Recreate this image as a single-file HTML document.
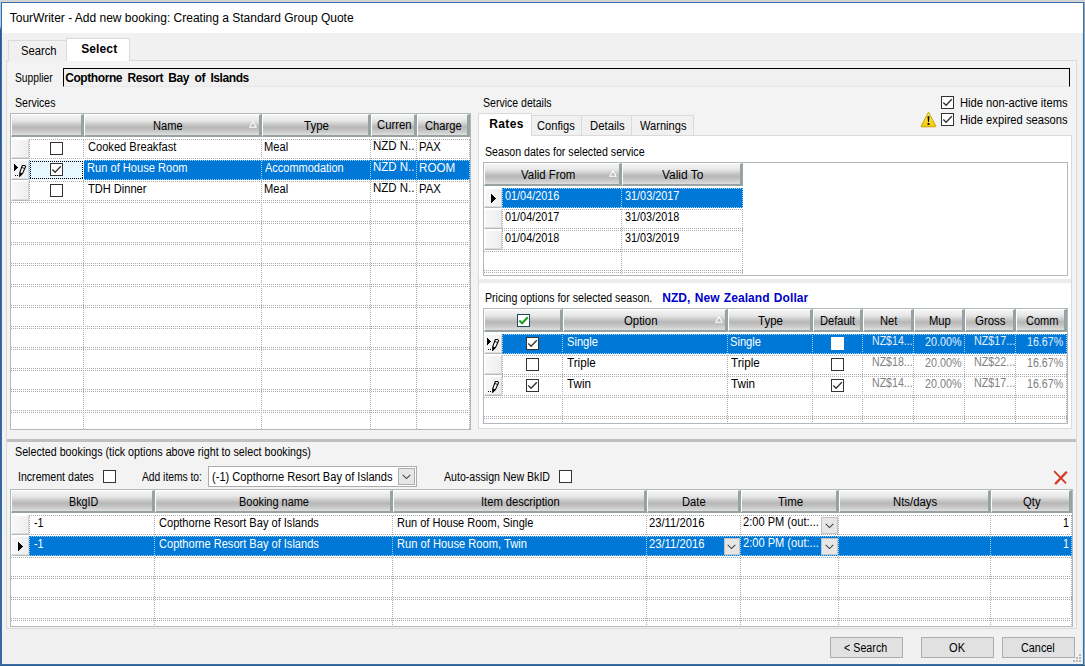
<!DOCTYPE html><html><head><meta charset="utf-8"><title>TourWriter</title><style>
*{box-sizing:border-box;margin:0;padding:0}
html,body{width:1085px;height:666px;overflow:hidden}
body{position:relative;background:#f1f1f1;font-family:"Liberation Sans",sans-serif;font-size:11px;color:#000}
.a{position:absolute}
.t{position:absolute;white-space:nowrap;line-height:13px;height:13px}
.h{position:absolute;background:linear-gradient(180deg,#f6f6f6 0%,#e6e6e6 28%,#b7b7b7 60%,#c3c3c3 76%,#dedede 100%);border-left:1px solid #fff;border-top:1px solid #fff;border-right:3px solid #98a3a1;border-bottom:2px solid #98a3a1;overflow:hidden}
.hd{position:absolute;height:1px;background-image:repeating-linear-gradient(90deg,#acacac 0,#acacac 1px,transparent 1px,transparent 2px)}
.vd{position:absolute;width:1px;background-image:repeating-linear-gradient(180deg,#acacac 0,#acacac 1px,transparent 1px,transparent 2px)}
.hdw{position:absolute;height:1px;background-image:repeating-linear-gradient(90deg,#9fd0f5 0,#9fd0f5 1px,transparent 1px,transparent 2px)}
.vdw{position:absolute;width:1px;background-image:repeating-linear-gradient(180deg,#9fd0f5 0,#9fd0f5 1px,transparent 1px,transparent 2px)}
.hdk{position:absolute;height:1px;background-image:repeating-linear-gradient(90deg,#000 0,#000 1px,transparent 1px,transparent 2px)}
.vdk{position:absolute;width:1px;background-image:repeating-linear-gradient(180deg,#000 0,#000 1px,transparent 1px,transparent 2px)}
.rs{position:absolute;background:linear-gradient(90deg,#f8f8f8,#eeeeee);border-top:1px solid #fff;border-left:1px solid #fff;border-right:1px solid #d4d4d4;border-bottom:1px solid #b4baba;box-shadow:inset 0 -1px 0 #dcdcdc}
.cb{position:absolute;width:13px;height:13px;border:1px solid #333;background:#fff}
.grid{position:absolute;background:#fff;border:1px solid #b0b8c0;overflow:hidden}
.sel{position:absolute;background:#0078d7}
.btn{position:absolute;background:#e1e1e1;border:1px solid #adadad}
.dd{position:absolute;background:#e6e6e6;border:1px solid #c2c2c2}
</style></head><body>
<div class="a" style="left:0px;top:0px;width:1085px;height:2px;background:linear-gradient(180deg,#cfcfcf,#dadada)"></div>
<div class="a" style="left:0px;top:2px;width:1px;height:664px;background:linear-gradient(180deg,#a9cdf0 0,#a9cdf0 24px,#2f5597 28px,#3a66a8 100%)"></div>
<div class="a" style="left:1px;top:2px;width:1083px;height:663px;border:1px solid #386ea8;background:transparent"></div>
<div class="a" style="left:1084px;top:2px;width:1px;height:664px;background:#8fa6bd"></div>
<div class="a" style="left:1082px;top:33px;width:1px;height:631px;background:#d4edfb"></div>
<div class="a" style="left:0px;top:665px;width:1085px;height:1px;background:#35608c"></div>
<div class="a" style="left:2px;top:3px;width:1081px;height:30px;background:#fff"></div>
<div class="t" style="left:9.73px;top:11px;font-size:12px;letter-spacing:-0.001px;line-height:15px;height:15px">TourWriter - Add new booking: Creating a Standard Group Quote</div>
<div class="a" style="left:6px;top:60px;width:1071px;height:569px;border:1px solid #dadada;background:#f3f3f3"></div>
<div class="a" style="left:8px;top:40px;width:59px;height:21px;border:1px solid #dadada;border-bottom:none;background:#f0f0f0"></div>
<div class="t" style="left:20.79px;top:45px;font-size:12.5px;transform-origin:0 0;transform:scaleX(0.8967);">Search</div>
<div class="a" style="left:66px;top:38px;width:64px;height:23px;border:1px solid #dadada;border-bottom:none;background:#fff"></div>
<div class="t" style="left:81.15px;top:43px;font-size:12px;font-weight:bold;letter-spacing:0.130px;">Select</div>
<div class="t" style="left:15.03px;top:72px;font-size:12.5px;transform-origin:0 0;transform:scaleX(0.8203);">Supplier</div>
<div class="a" style="left:63px;top:68px;width:1007px;height:19px;border-top:1px solid #000;border-left:1px solid #000;border-right:1px solid #000;border-bottom:1px solid #e8e8e8;background:#f0f0f0"></div>
<div class="t" style="left:65.21px;top:72px;font-size:12px;font-weight:bold;word-spacing:2.5px;letter-spacing:-0.422px;">Copthorne Resort Bay of Islands</div>
<div class="t" style="left:15.02px;top:97px;font-size:12.5px;transform-origin:0 0;transform:scaleX(0.8440);">Services</div>
<div class="grid" style="left:10px;top:113px;width:461px;height:317px">
<div class="h" style="left:0px;top:0px;width:73px;height:23px;"></div>
<div class="h" style="left:73px;top:0px;width:178px;height:23px;"></div>
<div class="t" style="left:141.99px;top:6px;font-size:12.5px;transform-origin:0 0;transform:scaleX(0.8878);">Name</div>
<svg class="a" style="left:238px;top:7px" width="8" height="7" viewBox="0 0 8 7"><path d="M4 0.9 L7.3 6.3 L0.7 6.3 Z" fill="#b8b8b8" stroke="#fff" stroke-width="1.1"/></svg>
<div class="h" style="left:251px;top:0px;width:109px;height:23px;"></div>
<div class="t" style="left:293.44px;top:6px;font-size:12.5px;transform-origin:0 0;transform:scaleX(0.9210);">Type</div>
<div class="h" style="left:360px;top:0px;width:46px;height:23px;"></div>
<div class="t" style="left:366.13px;top:5px;font-size:12.5px;transform-origin:0 0;transform:scaleX(0.9031);">Curren</div>
<div class="h" style="left:406px;top:0px;width:53px;height:23px;"></div>
<div class="t" style="left:414.43px;top:6px;font-size:12.5px;transform-origin:0 0;transform:scaleX(0.8939);">Charge</div>
<div class="hd" style="left:18px;top:25px;width:441px;height:1px;"></div>
<div class="hd" style="left:18px;top:44px;width:441px;height:1px;"></div>
<div class="rs" style="left:0px;top:25px;width:18px;height:20px;"></div>
<div class="sel" style="left:73px;top:46px;width:386px;height:20px;"></div>
<div class="hdw" style="left:73px;top:46px;width:386px;height:1px;"></div>
<div class="hdw" style="left:73px;top:65px;width:386px;height:1px;"></div>
<div class="hd" style="left:18px;top:46px;width:55px;height:1px;"></div>
<div class="hd" style="left:18px;top:65px;width:55px;height:1px;"></div>
<div class="rs" style="left:0px;top:46px;width:18px;height:20px;"></div>
<div class="hd" style="left:18px;top:67px;width:441px;height:1px;"></div>
<div class="hd" style="left:18px;top:86px;width:441px;height:1px;"></div>
<div class="rs" style="left:0px;top:67px;width:18px;height:20px;"></div>
<div class="hd" style="left:0px;top:88px;width:459px;height:1px;"></div>
<div class="hd" style="left:0px;top:107px;width:459px;height:1px;"></div>
<div class="hd" style="left:0px;top:109px;width:459px;height:1px;"></div>
<div class="hd" style="left:0px;top:128px;width:459px;height:1px;"></div>
<div class="hd" style="left:0px;top:130px;width:459px;height:1px;"></div>
<div class="hd" style="left:0px;top:149px;width:459px;height:1px;"></div>
<div class="hd" style="left:0px;top:151px;width:459px;height:1px;"></div>
<div class="hd" style="left:0px;top:170px;width:459px;height:1px;"></div>
<div class="hd" style="left:0px;top:172px;width:459px;height:1px;"></div>
<div class="hd" style="left:0px;top:191px;width:459px;height:1px;"></div>
<div class="hd" style="left:0px;top:193px;width:459px;height:1px;"></div>
<div class="hd" style="left:0px;top:212px;width:459px;height:1px;"></div>
<div class="hd" style="left:0px;top:214px;width:459px;height:1px;"></div>
<div class="hd" style="left:0px;top:233px;width:459px;height:1px;"></div>
<div class="hd" style="left:0px;top:235px;width:459px;height:1px;"></div>
<div class="hd" style="left:0px;top:254px;width:459px;height:1px;"></div>
<div class="hd" style="left:0px;top:256px;width:459px;height:1px;"></div>
<div class="hd" style="left:0px;top:275px;width:459px;height:1px;"></div>
<div class="hd" style="left:0px;top:277px;width:459px;height:1px;"></div>
<div class="hd" style="left:0px;top:296px;width:459px;height:1px;"></div>
<div class="hd" style="left:0px;top:298px;width:459px;height:1px;"></div>
<div class="hd" style="left:0px;top:317px;width:459px;height:1px;"></div>
<div class="vd" style="left:72px;top:26px;width:1px;height:290px;"></div>
<div class="vd" style="left:250px;top:26px;width:1px;height:290px;"></div>
<div class="vd" style="left:359px;top:26px;width:1px;height:290px;"></div>
<div class="vd" style="left:405px;top:26px;width:1px;height:290px;"></div>
<div class="vd" style="left:458px;top:26px;width:1px;height:290px;"></div>
<div class="vd" style="left:18px;top:26px;width:1px;height:61px;"></div>
<div class="a" style="left:72px;top:46px;width:1px;height:20px;background:#0078d7"></div>
<div class="vdw" style="left:72px;top:47px;width:1px;height:19px;"></div>
<div class="a" style="left:250px;top:46px;width:1px;height:20px;background:#0078d7"></div>
<div class="vdw" style="left:250px;top:47px;width:1px;height:19px;"></div>
<div class="a" style="left:359px;top:46px;width:1px;height:20px;background:#0078d7"></div>
<div class="vdw" style="left:359px;top:47px;width:1px;height:19px;"></div>
<div class="a" style="left:405px;top:46px;width:1px;height:20px;background:#0078d7"></div>
<div class="vdw" style="left:405px;top:47px;width:1px;height:19px;"></div>
<div class="a" style="left:458px;top:46px;width:1px;height:20px;background:#0078d7"></div>
<div class="vdw" style="left:458px;top:47px;width:1px;height:19px;"></div>
<div class="t" style="left:76.74px;top:27px;font-size:12.5px;transform-origin:0 0;transform:scaleX(0.8885);color:#000;">Cooked Breakfast</div>
<div class="t" style="left:253.08999999999997px;top:27px;font-size:12.5px;transform-origin:0 0;transform:scaleX(0.8917);color:#000;">Meal</div>
<div class="t" style="left:361.66px;top:26px;font-size:12.5px;transform-origin:0 0;transform:scaleX(0.9193);color:#000;">NZD N..</div>
<div class="t" style="left:407.67px;top:27px;font-size:12.5px;transform-origin:0 0;transform:scaleX(0.9069);color:#000;">PAX</div>
<div class="t" style="left:76.39px;top:48px;font-size:12.5px;transform-origin:0 0;transform:scaleX(0.8882);color:#fff;">Run of House Room</div>
<div class="t" style="left:253.98000000000002px;top:48px;font-size:12.5px;transform-origin:0 0;transform:scaleX(0.8781);color:#fff;">Accommodation</div>
<div class="t" style="left:361.66px;top:47px;font-size:12.5px;transform-origin:0 0;transform:scaleX(0.9193);color:#fff;">NZD N..</div>
<div class="t" style="left:407.65px;top:48px;font-size:12.5px;transform-origin:0 0;transform:scaleX(0.9312);color:#fff;">ROOM</div>
<div class="t" style="left:77.05px;top:69px;font-size:12.5px;transform-origin:0 0;transform:scaleX(0.8856);color:#000;">TDH Dinner</div>
<div class="t" style="left:253.08999999999997px;top:69px;font-size:12.5px;transform-origin:0 0;transform:scaleX(0.8917);color:#000;">Meal</div>
<div class="t" style="left:361.66px;top:68px;font-size:12.5px;transform-origin:0 0;transform:scaleX(0.9193);color:#000;">NZD N..</div>
<div class="t" style="left:407.67px;top:69px;font-size:12.5px;transform-origin:0 0;transform:scaleX(0.9069);color:#000;">PAX</div>
<div class="a" style="left:18px;top:46px;width:55px;height:20px;background:#e7f7ff"></div>
<div class="hdk" style="left:19px;top:47px;width:53px;height:1px;"></div>
<div class="hdk" style="left:19px;top:64px;width:53px;height:1px;"></div>
<div class="vdk" style="left:19px;top:47px;width:1px;height:18px;"></div>
<div class="vdk" style="left:71px;top:47px;width:1px;height:18px;"></div>
<div class="vd" style="left:18px;top:46px;width:1px;height:20px;background-image:repeating-linear-gradient(180deg,#3a8ad6 0,#3a8ad6 1px,transparent 1px,transparent 2px)"></div>
<div class="cb" style="left:39px;top:28px;"></div>
<div class="cb" style="left:39px;top:49px;"><svg class="a" style="left:0;top:0" width="11" height="11" viewBox="0 0 11 11"><path d="M1.3 5.5 L4.1 8.3 L9.8 2.3" fill="none" stroke="#333" stroke-width="1.3"/></svg></div>
<div class="cb" style="left:39px;top:70px;"></div>
<svg class="a" style="left:3px;top:50px" width="4" height="7" viewBox="0 0 4 7" shape-rendering="crispEdges"><rect x="0" y="0" width="1" height="7"/><rect x="1" y="1" width="1" height="5"/><rect x="2" y="2" width="1" height="3"/><rect x="3" y="3" width="1" height="1"/></svg>
<svg class="a" style="left:3px;top:50px" width="13" height="13" viewBox="0 0 13 13"><path d="M8.3 1.5 L10.6 1.5 L11.6 2.7 L8.5 9.4 L5.7 12.2 L5.8 8.6 Z" fill="#fff" stroke="#000" stroke-width="1.1"/><path d="M5.8 8.6 L8.5 9.4 L5.7 12.2 Z" fill="#000"/><path d="M7.4 3.4 L10.6 4.4" stroke="#000" stroke-width="0.9"/><rect x="1" y="11" width="1" height="1" fill="#000"/><rect x="3" y="11" width="1" height="1" fill="#000"/></svg>
</div>
<div class="t" style="left:483.32px;top:97px;font-size:12.5px;transform-origin:0 0;transform:scaleX(0.8431);">Service details</div>
<div class="cb" style="left:941px;top:96px;"><svg class="a" style="left:0;top:0" width="11" height="11" viewBox="0 0 11 11"><path d="M1.3 5.5 L4.1 8.3 L9.8 2.3" fill="none" stroke="#333" stroke-width="1.3"/></svg></div>
<div class="t" style="left:959.78px;top:97px;font-size:12.5px;transform-origin:0 0;transform:scaleX(0.8950);">Hide non-active items</div>
<div class="cb" style="left:941px;top:113px;"><svg class="a" style="left:0;top:0" width="11" height="11" viewBox="0 0 11 11"><path d="M1.3 5.5 L4.1 8.3 L9.8 2.3" fill="none" stroke="#333" stroke-width="1.3"/></svg></div>
<div class="t" style="left:959.78px;top:114px;font-size:12.5px;transform-origin:0 0;transform:scaleX(0.8948);">Hide expired seasons</div>
<svg class="a" style="left:920px;top:111px" width="17" height="17" viewBox="0 0 17 17"><defs><linearGradient id="wg" x1="0" y1="0" x2="0" y2="1"><stop offset="0" stop-color="#fff27a"/><stop offset="1" stop-color="#f3c800"/></linearGradient></defs><path d="M8.5 1.2 L15.8 15 Q16 15.8 15 15.8 L2 15.8 Q1 15.8 1.2 15 Z" fill="url(#wg)" stroke="#c9a400" stroke-width="1"/><path d="M7.5 5.2 L9.5 5.2 L9 11 L8 11 Z" fill="#000"/><rect x="7.6" y="12" width="1.8" height="1.9" fill="#000"/></svg>
<div class="a" style="left:478px;top:135px;width:594px;height:294px;border:1px solid #dadada;background:#fff"></div>
<div class="a" style="left:478px;top:113px;width:54px;height:23px;border:1px solid #dadada;border-bottom:none;background:#fff"></div>
<div class="t" style="left:489.2px;top:118px;font-size:12px;font-weight:bold;letter-spacing:0.402px;">Rates</div>
<div class="a" style="left:531px;top:115px;width:51px;height:20px;border:1px solid #dadada;border-bottom:none;background:#f0f0f0"></div>
<div class="t" style="left:536.63px;top:120px;font-size:12.5px;transform-origin:0 0;transform:scaleX(0.8907);">Configs</div>
<div class="a" style="left:581px;top:115px;width:51px;height:20px;border:1px solid #dadada;border-bottom:none;background:#f0f0f0"></div>
<div class="t" style="left:589.87px;top:120px;font-size:12.5px;transform-origin:0 0;transform:scaleX(0.9065);">Details</div>
<div class="a" style="left:631px;top:115px;width:63px;height:20px;border:1px solid #dadada;border-bottom:none;background:#f0f0f0"></div>
<div class="t" style="left:639.95px;top:120px;font-size:12.5px;transform-origin:0 0;transform:scaleX(0.8874);">Warnings</div>
<div class="a" style="left:479px;top:279px;width:592px;height:4px;background:#ececec"></div>
<div class="t" style="left:485.02px;top:146px;font-size:12.5px;transform-origin:0 0;transform:scaleX(0.8504);">Season dates for selected service</div>
<div class="grid" style="left:483px;top:162px;width:585px;height:114px">
<div class="h" style="left:0px;top:0px;width:138px;height:23px;"></div>
<div class="t" style="left:37.14999999999998px;top:6px;font-size:12.5px;transform-origin:0 0;transform:scaleX(0.9141);">Valid From</div>
<svg class="a" style="left:125px;top:7px" width="8" height="7" viewBox="0 0 8 7"><path d="M4 0.9 L7.3 6.3 L0.7 6.3 Z" fill="#b8b8b8" stroke="#fff" stroke-width="1.1"/></svg>
<div class="h" style="left:138px;top:0px;width:121px;height:23px;"></div>
<div class="t" style="left:178.35000000000002px;top:6px;font-size:12.5px;transform-origin:0 0;transform:scaleX(0.9541);">Valid To</div>
<div class="sel" style="left:18px;top:25px;width:241px;height:20px;"></div>
<div class="hdw" style="left:18px;top:25px;width:241px;height:1px;"></div>
<div class="hdw" style="left:18px;top:44px;width:241px;height:1px;"></div>
<div class="rs" style="left:0px;top:25px;width:18px;height:20px;"></div>
<div class="hd" style="left:18px;top:46px;width:241px;height:1px;"></div>
<div class="hd" style="left:18px;top:65px;width:241px;height:1px;"></div>
<div class="rs" style="left:0px;top:46px;width:18px;height:20px;"></div>
<div class="hd" style="left:18px;top:67px;width:241px;height:1px;"></div>
<div class="hd" style="left:18px;top:86px;width:241px;height:1px;"></div>
<div class="rs" style="left:0px;top:67px;width:18px;height:20px;"></div>
<div class="hd" style="left:0px;top:88px;width:259px;height:1px;"></div>
<div class="hd" style="left:0px;top:107px;width:259px;height:1px;"></div>
<div class="hd" style="left:0px;top:109px;width:259px;height:1px;"></div>
<div class="hd" style="left:0px;top:128px;width:259px;height:1px;"></div>
<div class="vd" style="left:137px;top:26px;width:1px;height:87px;"></div>
<div class="vd" style="left:258px;top:26px;width:1px;height:87px;"></div>
<div class="vd" style="left:18px;top:26px;width:1px;height:61px;"></div>
<div class="a" style="left:18px;top:25px;width:1px;height:20px;background:#0078d7"></div>
<div class="vdw" style="left:18px;top:26px;width:1px;height:19px;"></div>
<div class="a" style="left:137px;top:25px;width:1px;height:20px;background:#0078d7"></div>
<div class="vdw" style="left:137px;top:26px;width:1px;height:19px;"></div>
<div class="a" style="left:258px;top:25px;width:1px;height:20px;background:#0078d7"></div>
<div class="vdw" style="left:258px;top:26px;width:1px;height:19px;"></div>
<div class="t" style="left:21.180000000000007px;top:27px;font-size:12.5px;transform-origin:0 0;transform:scaleX(0.8684);color:#fff;">01/04/2016</div>
<div class="t" style="left:141.09000000000003px;top:27px;font-size:12.5px;transform-origin:0 0;transform:scaleX(0.8694);color:#fff;">31/03/2017</div>
<div class="t" style="left:21.180000000000007px;top:48px;font-size:12.5px;transform-origin:0 0;transform:scaleX(0.8696);color:#000;">01/04/2017</div>
<div class="t" style="left:141.09000000000003px;top:48px;font-size:12.5px;transform-origin:0 0;transform:scaleX(0.8682);color:#000;">31/03/2018</div>
<div class="t" style="left:21.180000000000007px;top:69px;font-size:12.5px;transform-origin:0 0;transform:scaleX(0.8684);color:#000;">01/04/2018</div>
<div class="t" style="left:141.09000000000003px;top:69px;font-size:12.5px;transform-origin:0 0;transform:scaleX(0.8689);color:#000;">31/03/2019</div>
<svg class="a" style="left:7px;top:31px" width="5" height="9" viewBox="0 0 5 9" shape-rendering="crispEdges"><rect x="0" y="0" width="1" height="9"/><rect x="1" y="1" width="1" height="7"/><rect x="2" y="2" width="1" height="5"/><rect x="3" y="3" width="1" height="3"/><rect x="4" y="4" width="1" height="1"/></svg>
</div>
<div class="t" style="left:484.63px;top:292px;font-size:12.5px;transform-origin:0 0;transform:scaleX(0.8474);">Pricing options for selected season.</div>
<div class="t" style="left:662.2px;top:292px;font-size:12px;font-weight:bold;word-spacing:0.8px;letter-spacing:0.073px;color:#0000c8;">NZD, New Zealand Dollar</div>
<div class="grid" style="left:483px;top:308px;width:585px;height:116px">
<div class="h" style="left:0px;top:0px;width:79px;height:23px;"></div>
<div class="h" style="left:79px;top:0px;width:165px;height:23px;"></div>
<div class="t" style="left:139.86px;top:6px;font-size:12.5px;transform-origin:0 0;transform:scaleX(0.9081);">Option</div>
<svg class="a" style="left:231px;top:7px" width="8" height="7" viewBox="0 0 8 7"><path d="M4 0.9 L7.3 6.3 L0.7 6.3 Z" fill="#b8b8b8" stroke="#fff" stroke-width="1.1"/></svg>
<div class="h" style="left:244px;top:0px;width:85px;height:23px;"></div>
<div class="t" style="left:274.44000000000005px;top:6px;font-size:12.5px;transform-origin:0 0;transform:scaleX(0.9210);">Type</div>
<div class="h" style="left:329px;top:0px;width:50px;height:23px;"></div>
<div class="t" style="left:336.28999999999996px;top:6px;font-size:12.5px;transform-origin:0 0;transform:scaleX(0.8880);">Default</div>
<div class="h" style="left:379px;top:0px;width:51px;height:23px;"></div>
<div class="t" style="left:395.67999999999995px;top:6px;font-size:12.5px;transform-origin:0 0;transform:scaleX(0.8941);">Net</div>
<div class="h" style="left:430px;top:0px;width:51px;height:23px;"></div>
<div class="t" style="left:444.67999999999995px;top:6px;font-size:12.5px;transform-origin:0 0;transform:scaleX(0.8957);">Mup</div>
<div class="h" style="left:481px;top:0px;width:51px;height:23px;"></div>
<div class="t" style="left:491.41999999999996px;top:6px;font-size:12.5px;transform-origin:0 0;transform:scaleX(0.9174);">Gross</div>
<div class="h" style="left:532px;top:0px;width:51px;height:23px;"></div>
<div class="t" style="left:541.6400000000001px;top:6px;font-size:12.5px;transform-origin:0 0;transform:scaleX(0.8831);">Comm</div>
<div class="sel" style="left:18px;top:25px;width:565px;height:20px;"></div>
<div class="hdw" style="left:18px;top:25px;width:565px;height:1px;"></div>
<div class="hdw" style="left:18px;top:44px;width:565px;height:1px;"></div>
<div class="rs" style="left:0px;top:25px;width:18px;height:20px;"></div>
<div class="hd" style="left:18px;top:46px;width:565px;height:1px;"></div>
<div class="hd" style="left:18px;top:65px;width:565px;height:1px;"></div>
<div class="rs" style="left:0px;top:46px;width:18px;height:20px;"></div>
<div class="hd" style="left:18px;top:67px;width:565px;height:1px;"></div>
<div class="hd" style="left:18px;top:86px;width:565px;height:1px;"></div>
<div class="rs" style="left:0px;top:67px;width:18px;height:20px;"></div>
<div class="hd" style="left:0px;top:88px;width:583px;height:1px;"></div>
<div class="hd" style="left:0px;top:107px;width:583px;height:1px;"></div>
<div class="hd" style="left:0px;top:109px;width:583px;height:1px;"></div>
<div class="hd" style="left:0px;top:128px;width:583px;height:1px;"></div>
<div class="vd" style="left:78px;top:26px;width:1px;height:89px;"></div>
<div class="vd" style="left:243px;top:26px;width:1px;height:89px;"></div>
<div class="vd" style="left:328px;top:26px;width:1px;height:89px;"></div>
<div class="vd" style="left:378px;top:26px;width:1px;height:89px;"></div>
<div class="vd" style="left:429px;top:26px;width:1px;height:89px;"></div>
<div class="vd" style="left:480px;top:26px;width:1px;height:89px;"></div>
<div class="vd" style="left:531px;top:26px;width:1px;height:89px;"></div>
<div class="vd" style="left:582px;top:26px;width:1px;height:89px;"></div>
<div class="vd" style="left:18px;top:26px;width:1px;height:61px;"></div>
<div class="a" style="left:18px;top:25px;width:1px;height:20px;background:#0078d7"></div>
<div class="vdw" style="left:18px;top:26px;width:1px;height:19px;"></div>
<div class="a" style="left:78px;top:25px;width:1px;height:20px;background:#0078d7"></div>
<div class="vdw" style="left:78px;top:26px;width:1px;height:19px;"></div>
<div class="a" style="left:243px;top:25px;width:1px;height:20px;background:#0078d7"></div>
<div class="vdw" style="left:243px;top:26px;width:1px;height:19px;"></div>
<div class="a" style="left:328px;top:25px;width:1px;height:20px;background:#0078d7"></div>
<div class="vdw" style="left:328px;top:26px;width:1px;height:19px;"></div>
<div class="a" style="left:378px;top:25px;width:1px;height:20px;background:#0078d7"></div>
<div class="vdw" style="left:378px;top:26px;width:1px;height:19px;"></div>
<div class="a" style="left:429px;top:25px;width:1px;height:20px;background:#0078d7"></div>
<div class="vdw" style="left:429px;top:26px;width:1px;height:19px;"></div>
<div class="a" style="left:480px;top:25px;width:1px;height:20px;background:#0078d7"></div>
<div class="vdw" style="left:480px;top:26px;width:1px;height:19px;"></div>
<div class="a" style="left:531px;top:25px;width:1px;height:20px;background:#0078d7"></div>
<div class="vdw" style="left:531px;top:26px;width:1px;height:19px;"></div>
<div class="a" style="left:582px;top:25px;width:1px;height:20px;background:#0078d7"></div>
<div class="vdw" style="left:582px;top:26px;width:1px;height:19px;"></div>
<div class="cb" style="left:33px;top:5px;border-color:#24465c"><svg class="a" style="left:0;top:0" width="11" height="11" viewBox="0 0 11 11"><path d="M1.3 5.5 L4.1 8.3 L9.8 2.3" fill="none" stroke="#1e9e1e" stroke-width="2.1"/></svg></div>
<div class="t" style="left:83.19000000000005px;top:27px;font-size:12.5px;transform-origin:0 0;transform:scaleX(0.8917);color:#fff;">Single</div>
<div class="t" style="left:246.49px;top:27px;font-size:12.5px;transform-origin:0 0;transform:scaleX(0.8917);color:#fff;">Single</div>
<div class="cb" style="left:42px;top:28px;"><svg class="a" style="left:0;top:0" width="11" height="11" viewBox="0 0 11 11"><path d="M1.3 5.5 L4.1 8.3 L9.8 2.3" fill="none" stroke="#333" stroke-width="1.3"/></svg></div>
<div class="cb" style="left:347px;top:28px;border-color:#fff"></div>
<div class="t" style="left:387.92999999999995px;top:26px;font-size:12.5px;transform-origin:0 0;transform:scaleX(0.8470);color:#e4eefa;">NZ$14...</div>
<div class="t" style="left:440.76px;top:27px;font-size:12.5px;transform-origin:0 0;transform:scaleX(0.8631);color:#e4eefa;">20.00%</div>
<div class="t" style="left:489.82000000000005px;top:26px;font-size:12.5px;transform-origin:0 0;transform:scaleX(0.8579);color:#e4eefa;">NZ$17...</div>
<div class="t" style="left:542.8900000000001px;top:27px;font-size:12.5px;transform-origin:0 0;transform:scaleX(0.8529);color:#e4eefa;">16.67%</div>
<div class="t" style="left:83.44000000000005px;top:48px;font-size:12.5px;transform-origin:0 0;transform:scaleX(0.9348);color:#000;">Triple</div>
<div class="t" style="left:246.74px;top:48px;font-size:12.5px;transform-origin:0 0;transform:scaleX(0.9348);color:#000;">Triple</div>
<div class="cb" style="left:42px;top:49px;"></div>
<div class="cb" style="left:347px;top:49px;"></div>
<div class="t" style="left:387.92999999999995px;top:47px;font-size:12.5px;transform-origin:0 0;transform:scaleX(0.8470);color:#808080;">NZ$18...</div>
<div class="t" style="left:440.76px;top:48px;font-size:12.5px;transform-origin:0 0;transform:scaleX(0.8631);color:#808080;">20.00%</div>
<div class="t" style="left:489.82000000000005px;top:47px;font-size:12.5px;transform-origin:0 0;transform:scaleX(0.8579);color:#808080;">NZ$22...</div>
<div class="t" style="left:542.8900000000001px;top:48px;font-size:12.5px;transform-origin:0 0;transform:scaleX(0.8529);color:#808080;">16.67%</div>
<div class="t" style="left:83.44000000000005px;top:69px;font-size:12.5px;transform-origin:0 0;transform:scaleX(0.9350);color:#000;">Twin</div>
<div class="t" style="left:246.74px;top:69px;font-size:12.5px;transform-origin:0 0;transform:scaleX(0.9350);color:#000;">Twin</div>
<div class="cb" style="left:42px;top:70px;"><svg class="a" style="left:0;top:0" width="11" height="11" viewBox="0 0 11 11"><path d="M1.3 5.5 L4.1 8.3 L9.8 2.3" fill="none" stroke="#333" stroke-width="1.3"/></svg></div>
<div class="cb" style="left:347px;top:70px;"><svg class="a" style="left:0;top:0" width="11" height="11" viewBox="0 0 11 11"><path d="M1.3 5.5 L4.1 8.3 L9.8 2.3" fill="none" stroke="#333" stroke-width="1.3"/></svg></div>
<div class="t" style="left:387.92999999999995px;top:68px;font-size:12.5px;transform-origin:0 0;transform:scaleX(0.8470);color:#808080;">NZ$14...</div>
<div class="t" style="left:440.76px;top:69px;font-size:12.5px;transform-origin:0 0;transform:scaleX(0.8631);color:#808080;">20.00%</div>
<div class="t" style="left:489.82000000000005px;top:68px;font-size:12.5px;transform-origin:0 0;transform:scaleX(0.8579);color:#808080;">NZ$17...</div>
<div class="t" style="left:542.8900000000001px;top:69px;font-size:12.5px;transform-origin:0 0;transform:scaleX(0.8529);color:#808080;">16.67%</div>
<svg class="a" style="left:3px;top:29px" width="4" height="7" viewBox="0 0 4 7" shape-rendering="crispEdges"><rect x="0" y="0" width="1" height="7"/><rect x="1" y="1" width="1" height="5"/><rect x="2" y="2" width="1" height="3"/><rect x="3" y="3" width="1" height="1"/></svg>
<svg class="a" style="left:3px;top:29px" width="13" height="13" viewBox="0 0 13 13"><path d="M8.3 1.5 L10.6 1.5 L11.6 2.7 L8.5 9.4 L5.7 12.2 L5.8 8.6 Z" fill="#fff" stroke="#000" stroke-width="1.1"/><path d="M5.8 8.6 L8.5 9.4 L5.7 12.2 Z" fill="#000"/><path d="M7.4 3.4 L10.6 4.4" stroke="#000" stroke-width="0.9"/><rect x="1" y="11" width="1" height="1" fill="#000"/><rect x="3" y="11" width="1" height="1" fill="#000"/></svg>
<svg class="a" style="left:3px;top:71px" width="13" height="13" viewBox="0 0 13 13"><path d="M8.3 1.5 L10.6 1.5 L11.6 2.7 L8.5 9.4 L5.7 12.2 L5.8 8.6 Z" fill="#fff" stroke="#000" stroke-width="1.1"/><path d="M5.8 8.6 L8.5 9.4 L5.7 12.2 Z" fill="#000"/><path d="M7.4 3.4 L10.6 4.4" stroke="#000" stroke-width="0.9"/><rect x="1" y="11" width="1" height="1" fill="#000"/><rect x="3" y="11" width="1" height="1" fill="#000"/></svg>
</div>
<div class="a" style="left:7px;top:439px;width:1069px;height:3px;background:#bfbfbf"></div>
<div class="t" style="left:15.21px;top:446px;font-size:12.5px;transform-origin:0 0;transform:scaleX(0.8569);">Selected bookings (tick options above right to select bookings)</div>
<div class="t" style="left:18.42px;top:471px;font-size:12.5px;transform-origin:0 0;transform:scaleX(0.8468);">Increment dates</div>
<div class="cb" style="left:103px;top:470px;"></div>
<div class="t" style="left:141.58px;top:471px;font-size:12.5px;transform-origin:0 0;transform:scaleX(0.8212);">Add items to:</div>
<div class="a" style="left:208px;top:466px;width:209px;height:21px;border:1px solid #adadad;background:#fff"></div>
<div class="t" style="left:212.31px;top:471px;font-size:12.5px;transform-origin:0 0;transform:scaleX(0.8866);">(-1) Copthorne Resort Bay of Islands</div>
<div class="dd" style="left:398px;top:468px;width:17px;height:17px;border-color:#adadad"><svg class="a" style="left:3px;top:5px" width="9" height="6" viewBox="0 0 9 6"><path d="M0.7 0.9 L4.5 4.6 L8.3 0.9" fill="none" stroke="#444" stroke-width="1.1"/></svg></div>
<div class="t" style="left:444.48px;top:471px;font-size:12.5px;transform-origin:0 0;transform:scaleX(0.8475);">Auto-assign New BkID</div>
<div class="cb" style="left:559px;top:470px;"></div>
<svg class="a" style="left:1053px;top:470px" width="15" height="15" viewBox="0 0 15 15"><path d="M1.6 1.6 L12.6 12.8" stroke="#cc3520" stroke-width="1.7" fill="none" stroke-linecap="round"/><path d="M13.2 2.4 L2.8 13.4" stroke="#dc3c24" stroke-width="2.3" fill="none" stroke-linecap="round"/></svg>
<div class="grid" style="left:10px;top:489px;width:1063px;height:138px">
<div class="h" style="left:0px;top:0px;width:144px;height:23px;"></div>
<div class="t" style="left:57.519999999999996px;top:6px;font-size:12.5px;transform-origin:0 0;transform:scaleX(0.8572);">BkgID</div>
<div class="h" style="left:144px;top:0px;width:238px;height:23px;"></div>
<div class="t" style="left:228.1px;top:6px;font-size:12.5px;transform-origin:0 0;transform:scaleX(0.8751);">Booking name</div>
<div class="h" style="left:382px;top:0px;width:254px;height:23px;"></div>
<div class="t" style="left:469.77px;top:6px;font-size:12.5px;transform-origin:0 0;transform:scaleX(0.8921);">Item description</div>
<div class="h" style="left:636px;top:0px;width:94px;height:23px;"></div>
<div class="t" style="left:671.28px;top:6px;font-size:12.5px;transform-origin:0 0;transform:scaleX(0.8937);">Date</div>
<div class="h" style="left:730px;top:0px;width:98px;height:23px;"></div>
<div class="t" style="left:766.89px;top:6px;font-size:12.5px;transform-origin:0 0;transform:scaleX(0.9179);">Time</div>
<div class="h" style="left:828px;top:0px;width:152px;height:23px;"></div>
<div class="t" style="left:881.97px;top:6px;font-size:12.5px;transform-origin:0 0;transform:scaleX(0.9073);">Nts/days</div>
<div class="h" style="left:980px;top:0px;width:81px;height:23px;"></div>
<div class="t" style="left:1011.77px;top:6px;font-size:12.5px;transform-origin:0 0;transform:scaleX(0.9022);">Qty</div>
<div class="hd" style="left:18px;top:25px;width:1043px;height:1px;"></div>
<div class="hd" style="left:18px;top:44px;width:1043px;height:1px;"></div>
<div class="rs" style="left:0px;top:25px;width:18px;height:20px;"></div>
<div class="sel" style="left:18px;top:46px;width:1043px;height:20px;"></div>
<div class="hdw" style="left:18px;top:46px;width:1043px;height:1px;"></div>
<div class="hdw" style="left:18px;top:65px;width:1043px;height:1px;"></div>
<div class="rs" style="left:0px;top:46px;width:18px;height:20px;"></div>
<div class="hd" style="left:0px;top:67px;width:1061px;height:1px;"></div>
<div class="hd" style="left:0px;top:86px;width:1061px;height:1px;"></div>
<div class="hd" style="left:0px;top:88px;width:1061px;height:1px;"></div>
<div class="hd" style="left:0px;top:107px;width:1061px;height:1px;"></div>
<div class="hd" style="left:0px;top:109px;width:1061px;height:1px;"></div>
<div class="hd" style="left:0px;top:128px;width:1061px;height:1px;"></div>
<div class="hd" style="left:0px;top:130px;width:1061px;height:1px;"></div>
<div class="hd" style="left:0px;top:149px;width:1061px;height:1px;"></div>
<div class="vd" style="left:143px;top:26px;width:1px;height:111px;"></div>
<div class="vd" style="left:381px;top:26px;width:1px;height:111px;"></div>
<div class="vd" style="left:635px;top:26px;width:1px;height:111px;"></div>
<div class="vd" style="left:729px;top:26px;width:1px;height:111px;"></div>
<div class="vd" style="left:827px;top:26px;width:1px;height:111px;"></div>
<div class="vd" style="left:979px;top:26px;width:1px;height:111px;"></div>
<div class="vd" style="left:1060px;top:26px;width:1px;height:111px;"></div>
<div class="vd" style="left:18px;top:26px;width:1px;height:40px;"></div>
<div class="a" style="left:18px;top:46px;width:1px;height:20px;background:#0078d7"></div>
<div class="vdw" style="left:18px;top:47px;width:1px;height:19px;"></div>
<div class="a" style="left:143px;top:46px;width:1px;height:20px;background:#0078d7"></div>
<div class="vdw" style="left:143px;top:47px;width:1px;height:19px;"></div>
<div class="a" style="left:381px;top:46px;width:1px;height:20px;background:#0078d7"></div>
<div class="vdw" style="left:381px;top:47px;width:1px;height:19px;"></div>
<div class="a" style="left:635px;top:46px;width:1px;height:20px;background:#0078d7"></div>
<div class="vdw" style="left:635px;top:47px;width:1px;height:19px;"></div>
<div class="a" style="left:729px;top:46px;width:1px;height:20px;background:#0078d7"></div>
<div class="vdw" style="left:729px;top:47px;width:1px;height:19px;"></div>
<div class="a" style="left:827px;top:46px;width:1px;height:20px;background:#0078d7"></div>
<div class="vdw" style="left:827px;top:47px;width:1px;height:19px;"></div>
<div class="a" style="left:979px;top:46px;width:1px;height:20px;background:#0078d7"></div>
<div class="vdw" style="left:979px;top:47px;width:1px;height:19px;"></div>
<div class="a" style="left:1060px;top:46px;width:1px;height:20px;background:#0078d7"></div>
<div class="vdw" style="left:1060px;top:47px;width:1px;height:19px;"></div>
<div class="t" style="left:23.03px;top:27px;font-size:12.5px;transform-origin:0 0;transform:scaleX(0.8540);color:#000;">-1</div>
<div class="t" style="left:147.64px;top:27px;font-size:12.5px;transform-origin:0 0;transform:scaleX(0.8848);color:#000;">Copthorne Resort Bay of Islands</div>
<div class="t" style="left:386.1px;top:27px;font-size:12.5px;transform-origin:0 0;transform:scaleX(0.8797);color:#000;">Run of House Room, Single</div>
<div class="t" style="left:637.84px;top:27px;font-size:12.5px;transform-origin:0 0;transform:scaleX(0.8986);color:#000;">23/11/2016</div>
<div class="t" style="left:731.64px;top:26px;font-size:12.5px;transform-origin:0 0;transform:scaleX(0.8869);color:#000;">2:00 PM (out:...</div>
<div class="t" style="left:1052.17px;top:27px;font-size:12.5px;transform-origin:0 0;transform:scaleX(0.8546);color:#000;">1</div>
<div class="t" style="left:23.03px;top:48px;font-size:12.5px;transform-origin:0 0;transform:scaleX(0.8540);color:#fff;">-1</div>
<div class="t" style="left:147.64px;top:48px;font-size:12.5px;transform-origin:0 0;transform:scaleX(0.8848);color:#fff;">Copthorne Resort Bay of Islands</div>
<div class="t" style="left:386.09px;top:48px;font-size:12.5px;transform-origin:0 0;transform:scaleX(0.8916);color:#fff;">Run of House Room, Twin</div>
<div class="t" style="left:637.84px;top:48px;font-size:12.5px;transform-origin:0 0;transform:scaleX(0.8986);color:#fff;">23/11/2016</div>
<div class="t" style="left:731.64px;top:47px;font-size:12.5px;transform-origin:0 0;transform:scaleX(0.8869);color:#fff;">2:00 PM (out:...</div>
<div class="t" style="left:1052.17px;top:48px;font-size:12.5px;transform-origin:0 0;transform:scaleX(0.8546);color:#fff;">1</div>
<svg class="a" style="left:7px;top:52px" width="5" height="9" viewBox="0 0 5 9" shape-rendering="crispEdges"><rect x="0" y="0" width="1" height="9"/><rect x="1" y="1" width="1" height="7"/><rect x="2" y="2" width="1" height="5"/><rect x="3" y="3" width="1" height="3"/><rect x="4" y="4" width="1" height="1"/></svg>
<div class="dd" style="left:810px;top:27px;width:17px;height:17px;"><svg class="a" style="left:3px;top:5px" width="9" height="6" viewBox="0 0 9 6"><path d="M0.7 0.9 L4.5 4.6 L8.3 0.9" fill="none" stroke="#444" stroke-width="1.1"/></svg></div>
<div class="dd" style="left:810px;top:48px;width:17px;height:17px;"><svg class="a" style="left:3px;top:5px" width="9" height="6" viewBox="0 0 9 6"><path d="M0.7 0.9 L4.5 4.6 L8.3 0.9" fill="none" stroke="#444" stroke-width="1.1"/></svg></div>
<div class="dd" style="left:713px;top:48px;width:16px;height:17px;"><svg class="a" style="left:2px;top:5px" width="9" height="6" viewBox="0 0 9 6"><path d="M0.7 0.9 L4.5 4.6 L8.3 0.9" fill="none" stroke="#444" stroke-width="1.1"/></svg></div>
</div>
<div class="btn" style="left:830px;top:637px;width:73px;height:21px;"></div>
<div class="t" style="left:844.47px;top:642px;font-size:12.5px;transform-origin:0 0;transform:scaleX(0.8575);">&lt; Search</div>
<div class="btn" style="left:921px;top:637px;width:73px;height:21px;"></div>
<div class="t" style="left:948.77px;top:642px;font-size:12.5px;transform-origin:0 0;transform:scaleX(0.8880);">OK</div>
<div class="btn" style="left:1002px;top:637px;width:73px;height:21px;"></div>
<div class="t" style="left:1021.2px;top:642px;font-size:12.5px;transform-origin:0 0;transform:scaleX(0.8678);">Cancel</div>
<div class="a" style="left:1073px;top:660px;width:2px;height:2px;background:#b8b8b8"></div>
<div class="a" style="left:1076px;top:657px;width:2px;height:2px;background:#b8b8b8"></div>
<div class="a" style="left:1076px;top:660px;width:2px;height:2px;background:#b8b8b8"></div>
<div class="a" style="left:1079px;top:654px;width:2px;height:2px;background:#b8b8b8"></div>
<div class="a" style="left:1079px;top:657px;width:2px;height:2px;background:#b8b8b8"></div>
<div class="a" style="left:1079px;top:660px;width:2px;height:2px;background:#b8b8b8"></div>
</body></html>
